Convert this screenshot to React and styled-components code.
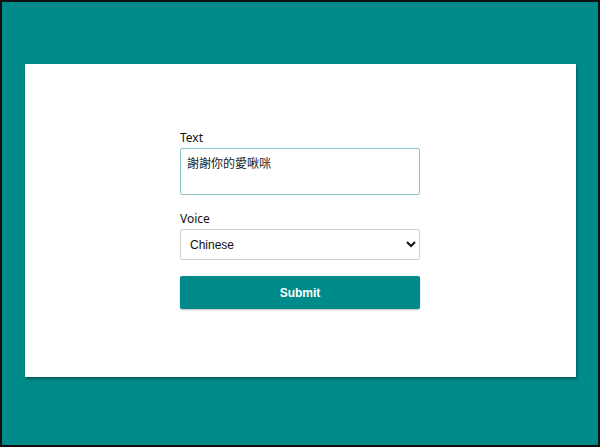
import React from 'react';
import styled, { createGlobalStyle } from 'styled-components';

const GlobalStyle = createGlobalStyle`
    html, body {
        margin: 0;
        padding: 0;
    }
    body {
        font-family: "Noto Sans", "Noto Sans CJK TC", sans-serif;
    }
`;

const Frame = styled.div`
    box-sizing: border-box;
    width: 600px;
    height: 447px;
    border: 2px solid #111;
    background: #008b8b;
    padding: 62px 22px 0 23px;
`;

const Card = styled.main`
    box-sizing: border-box;
    height: 313px;
    background: #fff;
    box-shadow: 1px 2px 3px rgba(0, 0, 0, 0.35);
    display: flex;
    justify-content: flex-start;
    padding: 66px 0 0 155px;
`;

const Form = styled.form`
    width: 240px;
    display: flex;
    flex-direction: column;
`;

const Label = styled.label`
    font-size: 12px;
    color: #111;
    line-height: 16px;
    margin-bottom: 2px;
`;

const TextArea = styled.textarea`
    box-sizing: border-box;
    width: 240px;
    height: 47px;
    border: 1px solid #8cc7c7;
    border-radius: 2px;
    padding: 5px 6px 4px;
    font-family: "Noto Sans CJK TC", sans-serif;
    font-size: 12px;
    color: #222;
    resize: none;
    outline: none;
    margin-bottom: 16px;
`;

const Select = styled.select`
    box-sizing: border-box;
    width: 240px;
    height: 31px;
    border: 1px solid #cfcfcf;
    border-radius: 2px;
    padding: 0 5px;
    font-family: "Liberation Sans", Arial, sans-serif;
    font-size: 12px;
    color: #111;
    background: #fff;
    margin-bottom: 16px;
`;

const Button = styled.button`
    box-sizing: border-box;
    width: 240px;
    height: 33px;
    border: none;
    border-radius: 2px;
    background: #008b8b;
    color: #fff;
    font-family: "Liberation Sans", Arial, sans-serif;
    font-weight: bold;
    font-size: 12px;
    box-shadow: 0 1px 2px rgba(0, 0, 0, 0.25);
`;

const App = () => {
    return (
        <>
            <GlobalStyle />
            <Frame>
                <Card>
                    <Form onSubmit={e => e.preventDefault()}>
                        <Label htmlFor="text">Text</Label>
                        <TextArea id="text" defaultValue="謝謝你的愛啾咪" />
                        <Label htmlFor="voice">Voice</Label>
                        <Select id="voice" defaultValue="zh">
                            <option value="zh">Chinese</option>
                            <option value="en">English</option>
                        </Select>
                        <Button type="submit">Submit</Button>
                    </Form>
                </Card>
            </Frame>
        </>
    );
};

export default App;
